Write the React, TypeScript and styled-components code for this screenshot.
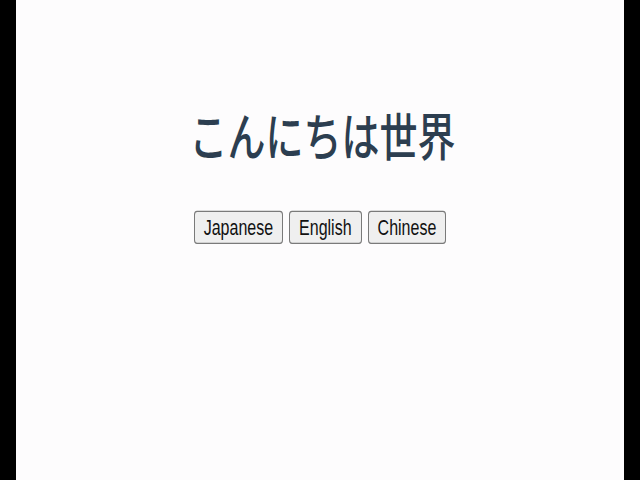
import React, { FC, useState } from 'react';
import styled, { createGlobalStyle } from 'styled-components';

const GlobalStyle = createGlobalStyle`
  html, body {
    margin: 0;
    padding: 0;
    background: #000;
    overflow: hidden;
  }
`;

const Page = styled.div`
  width: 608px;
  height: 100vh;
  margin: 0 auto;
  background: #fdfcfd;
`;

const Stage = styled.div`
  height: 360px;
  transform: scaleY(1.3333);
  transform-origin: top center;
  display: flex;
  flex-direction: column;
  align-items: center;
  font-family: 'Liberation Sans', Arial, sans-serif;
  color: #2c3e50;
`;

const Title = styled.h1`
  margin: 78px 0 0;
  font-family: 'Noto Sans CJK JP', 'Noto Sans', sans-serif;
  font-size: 38px;
  line-height: 46px;
  font-weight: 500;
  color: #2c3e50;
  padding-left: 5px;
`;

const LangBar = styled.div`
  display: flex;
  gap: 6px;
  margin-top: 34px;
`;

const LangButton = styled.button<{ $active?: boolean }>`
  font-family: 'Liberation Sans', Arial, sans-serif;
  font-size: 16px;
  line-height: 19px;
  padding: 2px 9px;
  color: #111;
  background: #efefef;
  border: 1px solid #7a7a7a;
  border-radius: 3px;
  cursor: pointer;
`;

const greetings: Record<string, string> = {
  Japanese: 'こんにちは世界',
  English: 'Hello World',
  Chinese: '你好世界',
};

const App: FC = () => {
  const [lang, setLang] = useState('Japanese');
  return (
    <>
      <GlobalStyle />
      <Page>
        <Stage>
          <Title>{greetings[lang]}</Title>
          <LangBar>
            {Object.keys(greetings).map((l) => (
              <LangButton key={l} $active={l === lang} onClick={() => setLang(l)}>
                {l}
              </LangButton>
            ))}
          </LangBar>
        </Stage>
      </Page>
    </>
  );
};

export default App;
